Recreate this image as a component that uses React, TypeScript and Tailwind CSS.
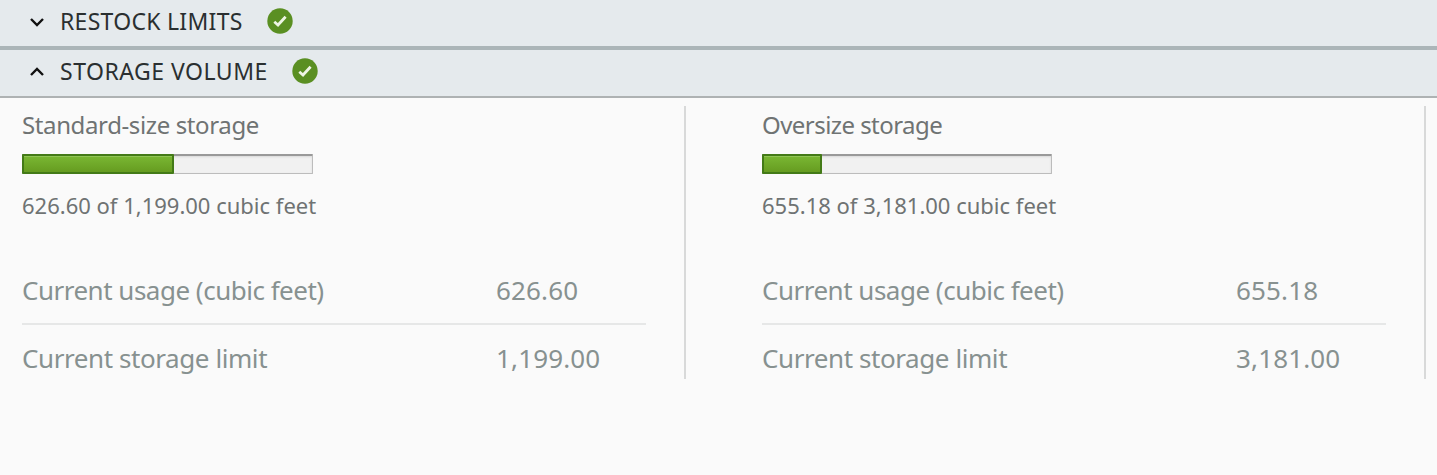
import React from 'react';

const storage = [
  {
    title: 'Standard-size storage',
    used: '626.60',
    limit: '1,199.00',
    bar: 'w-[291px]',
    fill: 'w-[152px]',
    titleSpacing: 'tracking-[-0.38px]',
  },
  {
    title: 'Oversize storage',
    used: '655.18',
    limit: '3,181.00',
    bar: 'w-[290px]',
    fill: 'w-[60px]',
    titleSpacing: 'tracking-[-0.55px]',
  },
];

const Chevron = ({ up = false }: { up?: boolean }) => (
  <svg className="w-4 h-4 mt-0.5 shrink-0" viewBox="0 0 16 16" fill="none" stroke="#111" strokeWidth="2.4">
    <path d={up ? 'M2 11 L8 5 L14 11' : 'M2 5 L8 11 L14 5'} />
  </svg>
);

const CheckBadge = () => (
  <svg className="w-[26px] h-[26px] shrink-0" viewBox="0 0 26 26" fill="none">
    <circle cx="13" cy="13" r="12.7" fill="#5a8f22" />
    <path d="M7.3 13.8 L11 17 L18.6 8.8" stroke="#eef5e4" strokeWidth="2.8" />
  </svg>
);

const StoragePanel = ({ item }: { item: (typeof storage)[number] }) => (
  <section className="w-[740px] shrink-0 flex">
    <div className="w-[662px] shrink-0 h-[273px] border-r-2 border-[#d8d9d9] box-content">
      <h3 className={`h-[39px] leading-[38px] text-[24px] text-[#6f7373] ${item.titleSpacing}`}>{item.title}</h3>
      <div
        className={`${item.bar} mt-[9px] h-5 rounded-[1px] border border-[#bcbcbc] border-t-2 border-t-[#999] bg-[#f1f1f1] shadow-[inset_0_1px_2px_#d8d8d8]`}
      >
        <div
          className={`${item.fill} -ml-px relative -top-0.5 h-5 rounded-[1px] border-2 border-[#437a17] bg-linear-to-b from-[#7ab733] to-[#669c20] shadow-[inset_0_1px_0_#8fc454]`}
        ></div>
      </div>
      <p className="mt-[15px] h-8 leading-8 text-[22px] text-[#6f7373]">
        {item.used} of {item.limit} cubic feet
      </p>
      <dl className="mt-[37px] w-[624px] text-[26px] text-[#879190]">
        <div className="flex h-[67px] items-center border-b-2 border-[#e6e7e7]">
          <dt className="w-[474px] tracking-[-0.5px]">Current usage (cubic feet)</dt>
          <dd className="tracking-[0.15px]">{item.used}</dd>
        </div>
        <div className="flex h-[67px] items-center">
          <dt className="w-[474px] tracking-[-0.42px]">Current storage limit</dt>
          <dd className="tracking-[0.15px]">{item.limit}</dd>
        </div>
      </dl>
    </div>
  </section>
);

export default function App() {
  return (
    <main className="w-full h-[475px] overflow-hidden bg-[#fafafa] font-['Noto_Sans',sans-serif] whitespace-nowrap">
      <header className="flex h-[50px] items-center border-b-4 border-[#abb5b8] bg-[#e5eaed] pb-1 pl-[29px] text-[#2a2f30]">
        <Chevron />
        <h2 className="ml-[15px] w-[207px] text-[23px] tracking-[0.28px]">RESTOCK LIMITS</h2>
        <CheckBadge />
      </header>
      <header className="flex h-12 items-center border-b-2 border-[#aeb2b3] bg-[#e5eaed] pb-1 pl-[29px] text-[#2a2f30]">
        <Chevron up />
        <h2 className="ml-[15px] w-[232px] text-[23px] tracking-[0.5px]">STORAGE VOLUME</h2>
        <CheckBadge />
      </header>
      <div className="flex pt-2 pl-[22px]">
        {storage.map((item) => (
          <StoragePanel key={item.title} item={item} />
        ))}
      </div>
    </main>
  );
}
